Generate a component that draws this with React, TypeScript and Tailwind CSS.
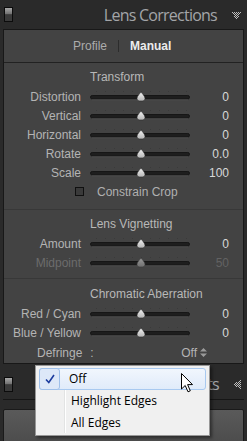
import React from "react";

const labelFont = { fontFamily: '"Liberation Sans", Arial, sans-serif' };

function Toggle() {
  return (
    <svg width="9" height="15" viewBox="0 0 9 15">
      <defs>
        <linearGradient id="tg" x1="0" y1="0" x2="0" y2="1">
          <stop offset="0" stopColor="#a8a8a8" />
          <stop offset="1" stopColor="#6c6c6c" />
        </linearGradient>
      </defs>
      <rect x="0.5" y="0.5" width="8" height="14" fill="#2e2e2e" stroke="#0c0c0c" />
      <rect x="1" y="1" width="7" height="6.5" fill="url(#tg)" />
      <rect x="1" y="7.5" width="7" height="6.5" fill="#3a3a3a" />
    </svg>
  );
}

function DotTriangle({ dir }: { dir: "down" | "left" }) {
  const dots: React.ReactElement[] = [];
  for (let y = 0; y < 8; y++) {
    for (let x = 0; x < 9; x++) {
      const half = y / 2;
      if (x < half || x > 8 - half) continue;
      if ((x + y) % 2 !== 0) continue;
      const px = dir === "down" ? x : y;
      const py = dir === "down" ? y : x;
      dots.push(<rect key={`${x}-${y}`} x={px} y={py} width="1" height="1" fill="#bdbdbd" />);
    }
  }
  const w = dir === "down" ? 9 : 8;
  const h = dir === "down" ? 8 : 9;
  if (dir === "left") {
    return (
      <svg width={w} height={h} viewBox={`0 0 ${w} ${h}`} style={{ transform: "scaleX(-1)" }}>
        {dots}
      </svg>
    );
  }
  return (
    <svg width={w} height={h} viewBox={`0 0 ${w} ${h}`}>
      {dots}
    </svg>
  );
}

function Slider({ dim }: { dim?: boolean }) {
  const ticks = [];
  for (let i = 0; i <= 10; i++) ticks.push(6 + i * 9);
  return (
    <svg width="100" height="19" viewBox="0 0 100 19">
      <defs>
        <linearGradient id={dim ? "thd" : "th"} x1="0" y1="0" x2="0" y2="1">
          <stop offset="0" stopColor={dim ? "#9a9a9a" : "#f4f4f4"} />
          <stop offset="1" stopColor={dim ? "#6e6e6e" : "#b4b4b4"} />
        </linearGradient>
      </defs>
      {ticks.map((t) => (
        <rect key={t} x={t} y="4" width="1" height="1" fill="#3a3a3a" />
      ))}
      <rect x="0.5" y="8.5" width="99" height="3.5" rx="1.75" fill="#1e1e1e" stroke="#161616" />
      <line x1="2" y1="12.8" x2="98" y2="12.8" stroke="#505050" strokeWidth="0.8" />
      <path
        d="M51 5 C52 6.5 55 9 55 11.5 C55 13.5 53.5 14 51 14 C48.5 14 47 13.5 47 11.5 C47 9 50 6.5 51 5 Z"
        fill={`url(#${dim ? "thd" : "th"})`}
        stroke={dim ? "#3a3a3a" : "#2a2a2a"}
        strokeWidth="0.6"
      />
    </svg>
  );
}

function SliderRow({ label, value, dim }: { label: string; value: string; dim?: boolean }) {
  return (
    <div className="flex h-[19px] items-center">
      <div
        className={`w-[77px] text-right text-[12px] leading-none ${dim ? "text-[#6c6c6c]" : "text-[#b4b4b4]"}`}
      >
        {label}
      </div>
      <div className="ml-[9px]">
        <Slider dim={dim} />
      </div>
      <div
        className={`w-[39px] text-right text-[12px] leading-none ${dim ? "text-[#626262]" : "text-[#d8d8d8]"}`}
      >
        {value}
      </div>
    </div>
  );
}

function SectionHead({ title }: { title: string }) {
  return (
    <div className="flex h-[20px] items-center pl-[86px] text-[12px] leading-none text-[#b8b8b8]">{title}</div>
  );
}

export default function App() {
  return (
    <div className="relative h-[441px] w-[247px] overflow-hidden bg-[#2a2a2a]" style={labelFont}>
      {/* Panel header */}
      <div className="flex h-[29px] items-center pl-[4px] pr-[6px]">
        <Toggle />
        <div
          className="ml-auto text-[16px] leading-none text-[#a3a5a8]"
          style={{ fontFamily: '"Open Sans", sans-serif', letterSpacing: "-0.75px" }}
        >
          Lens Corrections
        </div>
        <div className="ml-[15px] mt-[2px]">
          <DotTriangle dir="down" />
        </div>
      </div>

      {/* Panel body */}
      <div className="mx-[3px] border border-[#181818] bg-[#434343]">
        <div className="flex h-[32px] items-center text-[12px] leading-none">
          <span className="ml-[69px] text-[#acacac]">Profile</span>
          <span className="ml-[11px] h-[12px] w-px bg-[#2c2c2c]" />
          <span className="ml-[11px] font-semibold text-[#ececec]">Manual</span>
        </div>
        <div className="h-px bg-[#222]" />

        <div className="pb-[8px] pt-[4px]">
          <SectionHead title="Transform" />
          <SliderRow label="Distortion" value="0" />
          <SliderRow label="Vertical" value="0" />
          <SliderRow label="Horizontal" value="0" />
          <SliderRow label="Rotate" value="0.0" />
          <SliderRow label="Scale" value="100" />
          <div className="flex h-[19px] items-center">
            <div className="ml-[71px] h-[9px] w-[9px] border border-[#101010] bg-[#3a3a3a]" />
            <span className="ml-[13px] text-[12px] leading-none text-[#b0b0b0]">Constrain Crop</span>
          </div>
        </div>
        <div className="h-px bg-[#383838]" />

        <div className="pb-[6px] pt-[4px]">
          <SectionHead title="Lens Vignetting" />
          <SliderRow label="Amount" value="0" />
          <SliderRow label="Midpoint" value="50" dim />
        </div>
        <div className="h-px bg-[#383838]" />

        <div className="pt-[5px]">
          <SectionHead title="Chromatic Aberration" />
          <SliderRow label="Red / Cyan" value="0" />
          <SliderRow label="Blue / Yellow" value="0" />
          <div className="flex h-[21px] items-center text-[12px] leading-none text-[#b4b4b4]">
            <span className="ml-[33px]">Defringe</span>
            <span className="ml-[8px]">:</span>
            <span className="ml-auto">Off</span>
            <svg className="ml-[3px] mr-[36px]" width="7" height="9" viewBox="0 0 7 9">
              <path d="M3.5 0 L7 3.5 L0 3.5 Z M0 5.5 L7 5.5 L3.5 9 Z" fill="#9a9a9a" />
            </svg>
          </div>
        </div>
      </div>

      {/* Next panel header */}
      <div className="flex h-[35px] items-center pl-[4px] pr-[6px]">
        <div className="mt-[6px]">
          <Toggle />
        </div>
        <div
          className="ml-auto mt-[4px] text-[16px] leading-none text-[#a3a5a8]"
          style={{ fontFamily: '"Open Sans", sans-serif', letterSpacing: "-0.75px" }}
        >
          Effects
        </div>
        <div className="ml-[14px] mt-[5px]">
          <DotTriangle dir="left" />
        </div>
      </div>
      <div className="mx-[3px] h-px bg-[#161616]" />
      <div className="mx-[3px] mt-[9px] h-[40px] rounded-[2px] border border-[#1a1a1a] bg-gradient-to-b from-[#5a5a5a] to-[#4a4a4a]" />

      {/* Dropdown menu */}
      <div
        className="absolute left-[35px] top-[365px] h-[71px] w-[175px] border border-[#979797] bg-[#f0f0f0] py-[2px] shadow-[2px_2px_3px_rgba(0,0,0,0.45)]"
        style={{ fontFamily: '"Open Sans", sans-serif' }}
      >
        <div className="absolute bottom-[2px] left-[28px] top-[2px] w-px bg-[#e2e3e3]" />
        <div className="absolute bottom-[2px] left-[29px] top-[2px] w-px bg-white" />
        <div className="relative mx-[3px] flex h-[22px] items-center rounded-[3px] border border-[#a8c9f0] bg-gradient-to-b from-[#f1f6fd] to-[#e0ebfa]">
          <div className="flex h-[22px] w-[21px] -ml-px -mt-px items-center justify-center rounded-[3px] border border-[#9fc0ea] bg-[#dde8f8]">
            <svg width="10" height="10" viewBox="0 0 10 10">
              <path d="M1 5.5 L3.8 8.5 L9 1" fill="none" stroke="#1d3c9e" strokeWidth="1.6" />
            </svg>
          </div>
          <span className="ml-[9px] text-[12px] leading-none text-black">Off</span>
        </div>
        <div className="flex h-[22px] items-center pl-[35px] text-[12px] leading-none text-black">Highlight Edges</div>
        <div className="flex h-[22px] items-center pl-[35px] text-[12px] leading-none text-black">All Edges</div>
      </div>

      {/* Cursor */}
      <svg className="absolute left-[181px] top-[373px]" width="13" height="20" viewBox="0 0 13 20">
        <path
          d="M0.5 0.5 L0.5 16 L4.2 12.5 L7 18.8 L9.3 17.8 L6.6 11.6 L11.5 11.6 Z"
          fill="#fff"
          stroke="#000"
          strokeWidth="1"
          strokeLinejoin="round"
        />
      </svg>
    </div>
  );
}
